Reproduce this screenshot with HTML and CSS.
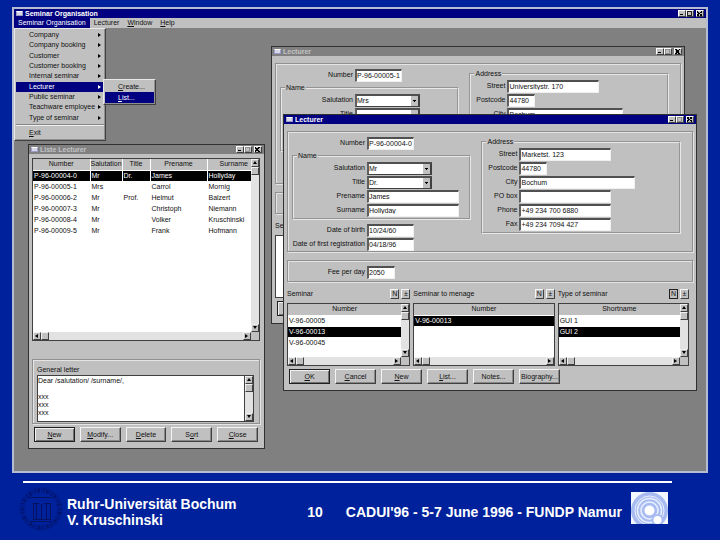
FILE: index.html
```html
<!DOCTYPE html>
<html lang="en">
<head>
<meta charset="utf-8">
<title>Seminar Organisation</title>
<link rel="stylesheet" href="styles.css">
</head>
<body>
<div class="slide">
  <main class="app">
    <header class="titlebar">
      <span class="sysicon"></span><h1>Seminar Organisation</h1>
      <button class="wbtn min" aria-label="Minimize"></button><button class="wbtn max" aria-label="Maximize"></button><button class="wbtn close" aria-label="Close"></button>
    </header>
    <nav class="menubar">
      <button class="active">Seminar Organisation</button>
      <button>Lecturer</button>
      <button><u>W</u>indow</button>
      <button><u>H</u>elp</button>
      <div class="menu main-menu">
        <div class="entries">
          <button class="sub">Company</button>
          <button class="sub">Company booking</button>
          <button class="sub">Customer</button>
          <button class="sub">Customer booking</button>
          <button class="sub">Internal seminar</button>
          <button class="sub active">Lecturer</button>
          <button class="sub">Public seminar</button>
          <button class="sub">Teachware employee</button>
          <button class="sub">Type of seminar</button>
        </div>
        <hr>
        <button class="exit"><u>E</u>xit</button>
      </div>
      <div class="menu sub-menu">
        <button><u>C</u>reate...</button>
        <button class="active"><u>L</u>ist...</button>
      </div>
    </nav>

    <div class="desktop">
      <section class="window list-window">
        <header class="titlebar inactive">
          <span class="sysicon"></span><h2>Liste Lecturer</h2>
          <button class="wbtn min" aria-label="Minimize"></button><button class="wbtn max" aria-label="Maximize"></button><button class="wbtn close" aria-label="Close"></button>
        </header>
        <div class="list-body">
          <div class="listbox tall">
            <div class="view">
              <table>
                <colgroup><col class="c-number"><col class="c-salutation"><col class="c-title"><col class="c-prename"><col></colgroup>
                <thead><tr><th>Number</th><th>Salutation</th><th>Title</th><th>Prename</th><th class="clipped">Surname</th></tr></thead>
                <tbody>
                  <tr class="selected"><td>P-96-00004-0</td><td>Mr</td><td>Dr.</td><td>James</td><td>Hollyday</td></tr>
                  <tr><td>P-96-00005-1</td><td>Mrs</td><td></td><td>Carrol</td><td>Mornig</td></tr>
                  <tr><td>P-96-00006-2</td><td>Mr</td><td>Prof.</td><td>Helmut</td><td>Balzert</td></tr>
                  <tr><td>P-96-00007-3</td><td>Mr</td><td></td><td>Christoph</td><td>Niemann</td></tr>
                  <tr><td>P-96-00008-4</td><td>Mr</td><td></td><td>Volker</td><td>Kruschinski</td></tr>
                  <tr><td>P-96-00009-5</td><td>Mr</td><td></td><td>Frank</td><td>Hofmann</td></tr>
                </tbody>
              </table>
            </div>
            <div class="vscroll"><button class="up" aria-label="Scroll up"></button><i></i><button class="down" aria-label="Scroll down"></button></div>
            <div class="hscroll"><button class="left" aria-label="Scroll left"></button><i></i><button class="right" aria-label="Scroll right"></button></div>
            <div class="corner"></div>
          </div>
          <div class="panel letter">
            <label for="letter">General letter</label>
            <div class="textbox">
              <textarea id="letter">Dear /salutation/ /surname/,

xxx
xxx
xxx</textarea>
              <div class="vscroll"><button class="up" aria-label="Scroll up"></button><i></i><button class="down" aria-label="Scroll down"></button></div>
            </div>
          </div>
          <div class="actions">
            <button class="btn default"><u>N</u>ew</button>
            <button class="btn"><u>M</u>odify...</button>
            <button class="btn"><u>D</u>elete</button>
            <button class="btn">S<u>o</u>rt</button>
            <button class="btn"><u>C</u>lose</button>
          </div>
        </div>
      </section>

      <section class="window form-window back">
        <header class="titlebar inactive">
          <span class="sysicon"></span><h2>Lecturer</h2>
          <button class="wbtn min" aria-label="Minimize"></button><button class="wbtn max" aria-label="Maximize"></button><button class="wbtn close" aria-label="Close"></button>
        </header>
        <div class="form-body">
          <div class="panel person">
            <div class="column">
              <div class="row"><label for="b-number">Number</label><input id="b-number" class="w-code" value="P-96-00005-1"></div>
              <fieldset class="name">
                <legend>Name</legend>
                <div class="row"><label for="b-sal">Salutation</label><select id="b-sal"><option>Mrs</option></select></div>
                <div class="row"><label for="b-title">Title</label><select id="b-title"><option></option></select></div>
              </fieldset>
            </div>
            <div class="column">
              <fieldset class="address">
                <legend>Address</legend>
                <div class="row"><label for="b-street">Street</label><input id="b-street" class="w-mid" value="Universitystr. 170"></div>
                <div class="row"><label for="b-post">Postcode</label><input id="b-post" class="w-short" value="44780"></div>
                <div class="row"><label for="b-city">City</label><input id="b-city" class="w-long" value="Bochum"></div>
              </fieldset>
            </div>
          </div>
          <div class="panel fee"></div>
          <div class="lists">
            <div class="list-col"><div class="caption"><span>Seminar</span></div><div class="listbox short"></div></div>
          </div>
          <div class="actions"><button class="btn default" aria-label="OK"></button></div>
        </div>
      </section>

      <section class="window form-window front">
        <header class="titlebar">
          <span class="sysicon"></span><h2>Lecturer</h2>
          <button class="wbtn min" aria-label="Minimize"></button><button class="wbtn max" aria-label="Maximize"></button><button class="wbtn close" aria-label="Close"></button>
        </header>
        <div class="form-body">
          <div class="panel person">
            <div class="column">
              <div class="row"><label for="number">Number</label><input id="number" class="w-code" value="P-96-00004-0"></div>
              <fieldset class="name">
                <legend>Name</legend>
                <div class="row"><label for="sal">Salutation</label><select id="sal"><option>Mr</option></select></div>
                <div class="row"><label for="title">Title</label><select id="title"><option>Dr.</option></select></div>
                <div class="row"><label for="prename">Prename</label><input id="prename" class="w-mid" value="James"></div>
                <div class="row"><label for="surname">Surname</label><input id="surname" class="w-mid" value="Hollyday"></div>
              </fieldset>
              <div class="row"><label for="birth">Date of birth</label><input id="birth" class="w-code" value="10/24/60"></div>
              <div class="row"><label for="reg">Date of first registration</label><input id="reg" class="w-code" value="04/18/96"></div>
            </div>
            <div class="column">
              <fieldset class="address">
                <legend>Address</legend>
                <div class="row"><label for="street">Street</label><input id="street" class="w-mid" value="Marketst. 123"></div>
                <div class="row"><label for="post">Postcode</label><input id="post" class="w-short" value="44780"></div>
                <div class="row"><label for="city">City</label><input id="city" class="w-long" value="Bochum"></div>
                <div class="row"><label for="pobox">PO box</label><input id="pobox" class="w-mid"></div>
                <div class="row"><label for="phone">Phone</label><input id="phone" class="w-mid" value="+49 234 700 6880"></div>
                <div class="row"><label for="fax">Fax</label><input id="fax" class="w-mid" value="+49 234 7094 427"></div>
              </fieldset>
            </div>
          </div>
          <div class="panel fee">
            <div class="row"><label for="fee">Fee per day</label><input id="fee" class="w-short" value="2050"></div>
          </div>
          <div class="lists">
            <div class="list-col">
              <div class="caption"><span>Seminar</span><button class="tool">N</button><button class="tool">±</button></div>
              <div class="listbox short">
                <div class="view">
                  <table>
                    <thead><tr><th>Number</th></tr></thead>
                    <tbody><tr><td>V-96-00005</td></tr><tr class="selected"><td>V-96-00013</td></tr><tr><td>V-96-00045</td></tr></tbody>
                  </table>
                </div>
                <div class="vscroll"><button class="up" aria-label="Scroll up"></button><i></i><button class="down" aria-label="Scroll down"></button></div>
                <div class="hscroll"><button class="left" aria-label="Scroll left"></button><i></i><button class="right" aria-label="Scroll right"></button></div>
                <div class="corner"></div>
              </div>
            </div>
            <div class="list-col">
              <div class="caption"><span>Seminar to menage</span><button class="tool">N</button><button class="tool">±</button></div>
              <div class="listbox short single">
                <div class="view">
                  <table>
                    <thead><tr><th>Number</th></tr></thead>
                    <tbody><tr class="selected"><td>V-96-00013</td></tr></tbody>
                  </table>
                </div>
                <div class="hscroll"><button class="left" aria-label="Scroll left"></button><i></i><button class="right" aria-label="Scroll right"></button></div>
              </div>
            </div>
            <div class="list-col">
              <div class="caption"><span>Type of seminar</span><button class="tool default">N</button><button class="tool">±</button></div>
              <div class="listbox short">
                <div class="view">
                  <table>
                    <thead><tr><th>Shortname</th></tr></thead>
                    <tbody><tr><td>GUI 1</td></tr><tr class="selected"><td>GUI 2</td></tr></tbody>
                  </table>
                </div>
                <div class="vscroll"><button class="up" aria-label="Scroll up"></button><i></i><button class="down" aria-label="Scroll down"></button></div>
                <div class="hscroll"><button class="left" aria-label="Scroll left"></button><i></i><button class="right" aria-label="Scroll right"></button></div>
                <div class="corner"></div>
              </div>
            </div>
          </div>
          <div class="actions">
            <button class="btn default"><u>O</u>K</button>
            <button class="btn"><u>C</u>ancel</button>
            <button class="btn"><u>N</u>ew</button>
            <button class="btn"><u>L</u>ist...</button>
            <button class="btn">Notes...</button>
            <button class="btn">Biography...</button>
          </div>
        </div>
      </section>
    </div>
  </main>

  <footer class="footer">
    <svg class="seal" viewBox="0 0 44 44" aria-hidden="true">
      <g fill="none" stroke="#001260">
        <circle cx="22" cy="22" r="18.500" stroke-width="4" stroke-dasharray="1.5 1.4 2.4 1.2 .8 1.6" opacity=".75"/>
        <circle cx="22" cy="22" r="21" stroke-width=".7" stroke-dasharray="2 1.5" opacity=".7"/>
        <path d="M10 10.500H33M10 34.500H33" stroke-width="1"/>
        <path d="M14.500 16V33M17.500 17V33M27.500 17V33M31.500 16V33M22.500 19V32M14 16.500H20L22.500 19L25 16.500H32M14 32.500H32" stroke-width="1"/>
      </g>
    </svg>
    <p class="org">Ruhr-Universität Bochum<br>V. Kruschinski</p>
    <p class="page">10</p>
    <p class="event">CADUI'96 - 5-7 June 1996 - FUNDP Namur</p>
    <svg class="rings" viewBox="0 0 37 32" aria-hidden="true">
      <rect width="37" height="32" fill="#f4f8ff"/>
      <circle cx="18.500" cy="18.500" r="18.500" fill="#a9bcf2"/>
      <g fill="none" stroke="#e9f0ff">
        <circle cx="18.500" cy="18.500" r="14.500" stroke-width="1"/>
        <circle cx="18.500" cy="18.500" r="12" stroke-width="1.500"/>
        <circle cx="18.500" cy="18.500" r="8.500" stroke-width="1.500"/>
      </g>
      <circle cx="18.500" cy="18.500" r="5" fill="#fff"/>
      <circle cx="26.500" cy="28" r="6" fill="#a9bcf2"/>
      <circle cx="26.500" cy="28" r="4" fill="#fff"/>
    </svg>
  </footer>
</div>
</body>
</html>
```

FILE: styles.css
```css
* { box-sizing: border-box; }

body {
  margin: 0;
  background: #00219c;
  color: #101010;
  font: 7px/8px "Liberation Sans", Arial, sans-serif;
}

button, input, select, textarea {
  margin: 0;
  padding: 0;
  border: 0;
  border-radius: 0;
  background: none;
  color: inherit;
  font: inherit;
}

button, label { white-space: nowrap; }
h1, h2, p { margin: 0; }
u { text-underline-offset: 1px; }

.slide {
  display: flex;
  flex-direction: column;
  min-height: 100vh;
  padding: 7px 12px 0;
}

.app {
  display: flex;
  flex: 1;
  flex-direction: column;
  border: 2px solid #b8bcd0;
  background: #c0c0c0;
}

/* Title bars */
.titlebar {
  display: flex;
  align-items: center;
  height: 9px;
  padding: 0 2px;
  background: #000080;
  color: #fff;
}
.titlebar h1, .titlebar h2 {
  flex: 1;
  font: bold 7px/9px "Liberation Sans", sans-serif;
}
.titlebar.inactive { background: #808080; color: #c4c4c4; }
.sysicon {
  width: 7px;
  height: 5px;
  margin-right: 2px;
  border: 1px solid #9c9cc8;
  border-top-color: #fff;
  background: #d8d8e8;
}
.wbtn {
  position: relative;
  width: 8px;
  height: 7px;
  border: 1px solid #404040;
  border-top-color: #fff;
  border-left-color: #fff;
  background: #c0c0c0;
}
.wbtn::after { content: ""; position: absolute; }
.min::after { left: 1px; bottom: 1px; width: 3px; height: 1px; background: #000; }
.max::after { inset: 0 1px 0 0; border: 1px solid #202020; }
.inactive .max::after, .front .max::after { border-color: #909090; }
.close { margin-left: 2px; }
.close::after {
  inset: 0 1px 0 0;
  background:
    linear-gradient(45deg, transparent 40%, #000 40% 60%, transparent 60%),
    linear-gradient(-45deg, transparent 40%, #000 40% 60%, transparent 60%);
}

/* Menus */
.menubar {
  position: relative;
  z-index: 5;
  display: flex;
  height: 10px;
}
.menubar > button { padding: 0 4px; line-height: 10px; }
.menubar .active { background: #000080; color: #fff; }
.menu {
  position: absolute;
  display: flex;
  flex-direction: column;
  border: 1px solid #404040;
  border-top-color: #e8e8e8;
  border-left-color: #e8e8e8;
  box-shadow: inset -1px -1px #909090;
  background: #c0c0c0;
}
.menu button { padding: 0 0 0 13px; text-align: left; }
.main-menu { top: 10px; left: 0; width: 92px; padding: 1px 1px 2px; }
.entries { display: grid; grid-auto-rows: 1fr; height: 93px; }
.sub { position: relative; }
.sub::after {
  content: "";
  position: absolute;
  top: calc(50% - 2px);
  right: 3px;
  border: 2px solid transparent;
  border-left: 3px solid #000;
  border-right: 0;
}
.sub.active::after { border-left-color: #fff; }
.menu hr { width: 100%; margin: 1px 0; border: 0; border-top: 1px solid #888; border-bottom: 1px solid #eee; }
.exit { height: 11px; }
.sub-menu { top: 61px; left: 89px; width: 53px; padding: 1px; }
.sub-menu button { height: 11px; }

/* Child windows */
.desktop {
  position: relative;
  flex: 1;
  min-height: 440px;
  overflow: hidden;
  background: #808080;
}
.window {
  position: absolute;
  border: 1px solid #303030;
  background: #c0c0c0;
}
.list-window { top: 116px; left: 14px; width: 237px; }
.form-window { width: 414px; }
.form-window.back { top: 18px; left: 257px; height: 278px; }
.form-window.front { top: 86px; left: 269px; }
.list-body { padding: 4px 4px 6px 3px; }
.form-body { padding: 7px 3px 6px; }

.panel {
  border: 1px solid #909090;
  box-shadow: inset 1px 1px #e4e4e4, 1px 1px #e4e4e4;
}
.person {
  display: grid;
  grid-template-columns: 179fr 199fr;
  gap: 10px;
  min-height: 121px;
  padding: 4px 11px 0 4px;
}
.fee { min-height: 22px; margin-top: 8px; padding: 4px; padding-bottom: 2px; }

fieldset { min-width: 0; margin: 2px 0 3px; padding: 1px 0; border: 2px groove #e8e8e8; }
legend { margin-left: 3px; padding: 0 1px; line-height: 8px; }
.back .name { height: 68px; }
.back .address { height: 95px; }

.row { display: flex; align-items: center; gap: 2px; height: 14px; }
.row label { display: flex; flex: none; justify-content: flex-end; width: 73px; }
.name .row label { width: 71px; }
.address .row label { width: 34px; }

.row input, .row select {
  height: 13px;
  padding: 0;
  border: 1px solid #f0f0f0;
  border-top: 2px solid #505050;
  border-left: 2px solid #606060;
  background-color: #fff;
}
.row select {
  width: 65px;
  appearance: none;
  border-bottom-color: #404040;
  border-right-color: #404040;
  background-image:
    linear-gradient(#000, #000), linear-gradient(#000, #000),
    linear-gradient(#404040, #404040), linear-gradient(#c0c0c0, #c0c0c0);
  background-repeat: no-repeat;
  background-size: 3px 1px, 1px 1px, 1px 100%, 8px 100%;
  background-position: right 3px top 4px, right 4px top 5px, right 0 top 0, right 0 top 0;
}
.row .w-code { width: 47px; }
.row .w-mid { width: 92px; }
.row .w-short { width: 28px; }
.row .w-long { width: 116px; }

/* List boxes */
.lists {
  display: grid;
  grid-template-columns: 123fr 141fr 131fr;
  gap: 3px;
  margin: 7px 4px 0 0;
}
.caption { display: flex; align-items: center; gap: 2px; height: 10px; margin-bottom: 4px; }
.caption span { flex: 1; }
.tool {
  width: 9px;
  height: 10px;
  border: 1px solid #404040;
  border-top-color: #f4f4f4;
  border-left-color: #f4f4f4;
  text-align: center;
}
.tool.default { border-color: #202020; }

.listbox {
  display: grid;
  grid-template: 1fr 8px / 1fr 8px;
  border: 1px solid #404040;
  background: #fff;
}
.listbox.single { grid-template-columns: 1fr; }
.tall { height: 183px; }
.short { height: 63px; }
.view { min-width: 0; overflow: hidden; }
.corner { background: #c0c0c0; }

table { width: 100%; table-layout: fixed; border-collapse: collapse; }
tr { height: 11px; }
th, td {
  padding: 0 1px;
  border-right: 1px solid #fff;
  border-bottom: 1px solid #fff;
  font-weight: normal;
  text-align: left;
  white-space: nowrap;
}
th:last-child, td:last-child { border-right: 0; }
th { padding: 0; background: #c0c0c0; text-align: center; }
th.clipped { padding-left: 9px; }
.selected td { background: #000; color: #fff; }
.c-number { width: 57px; }
.c-salutation { width: 32px; }
.c-title { width: 28px; }
.c-prename { width: 57px; }

.vscroll, .hscroll { display: flex; background: #e2e2e2; }
.vscroll { flex-direction: column; }
.vscroll button, .hscroll button, .vscroll i, .hscroll i {
  position: relative;
  flex: none;
  width: 8px;
  height: 8px;
  border: 1px solid #404040;
  border-top-color: #f0f0f0;
  border-left-color: #f0f0f0;
  background: #c0c0c0;
}
.vscroll button::after, .hscroll button::after {
  content: "";
  position: absolute;
  top: 1px;
  left: 1px;
  border: 2px solid transparent;
}
.vscroll .up::after { border-top: 0; border-bottom: 3px solid #000; }
.vscroll .down::after { border-bottom: 0; border-top: 3px solid #000; }
.hscroll .left::after { border-left: 0; border-right: 3px solid #000; }
.hscroll .right::after { border-right: 0; border-left: 3px solid #000; }
.vscroll .down { margin-top: auto; }
.hscroll .right { margin-left: auto; }

/* Letter editor */
.letter { margin-top: 18px; padding: 6px 5px 1px 4px; }
.letter label { display: block; margin-bottom: 1px; }
.textbox {
  display: flex;
  height: 47px;
  border: 1px solid #404040;
  background: #fff;
}
textarea { flex: 1; min-width: 0; padding: 1px 0; resize: none; overflow: hidden; }
.textbox .vscroll { border-left: 1px solid #404040; }

/* Push buttons */
.actions { display: flex; gap: 5px; margin: 3px 2px 0; }
.btn {
  width: 41px;
  height: 15px;
  border: 1px solid #404040;
  border-top-color: #f4f4f4;
  border-left-color: #f4f4f4;
  box-shadow: inset -1px -1px #888;
  text-align: center;
}
.btn.default { border-color: #202020; box-shadow: inset 1px 1px #f0f0f0, inset -1px -1px #707070; }

/* Slide footer */
.footer {
  display: flex;
  align-items: center;
  height: 59px;
  margin: 8px 36px 0 11px;
  border-top: 2px solid #fff;
  color: #fff;
  font: bold 14px/16px "Liberation Sans", sans-serif;
}
.seal { flex: none; width: 44px; height: 44px; margin: 0 4px 6px -4px; }
.org { flex: 1; }
.page { margin-right: 23px; }
.rings { width: 37px; height: 32px; margin: 0 4px 8px 9px; }
```
